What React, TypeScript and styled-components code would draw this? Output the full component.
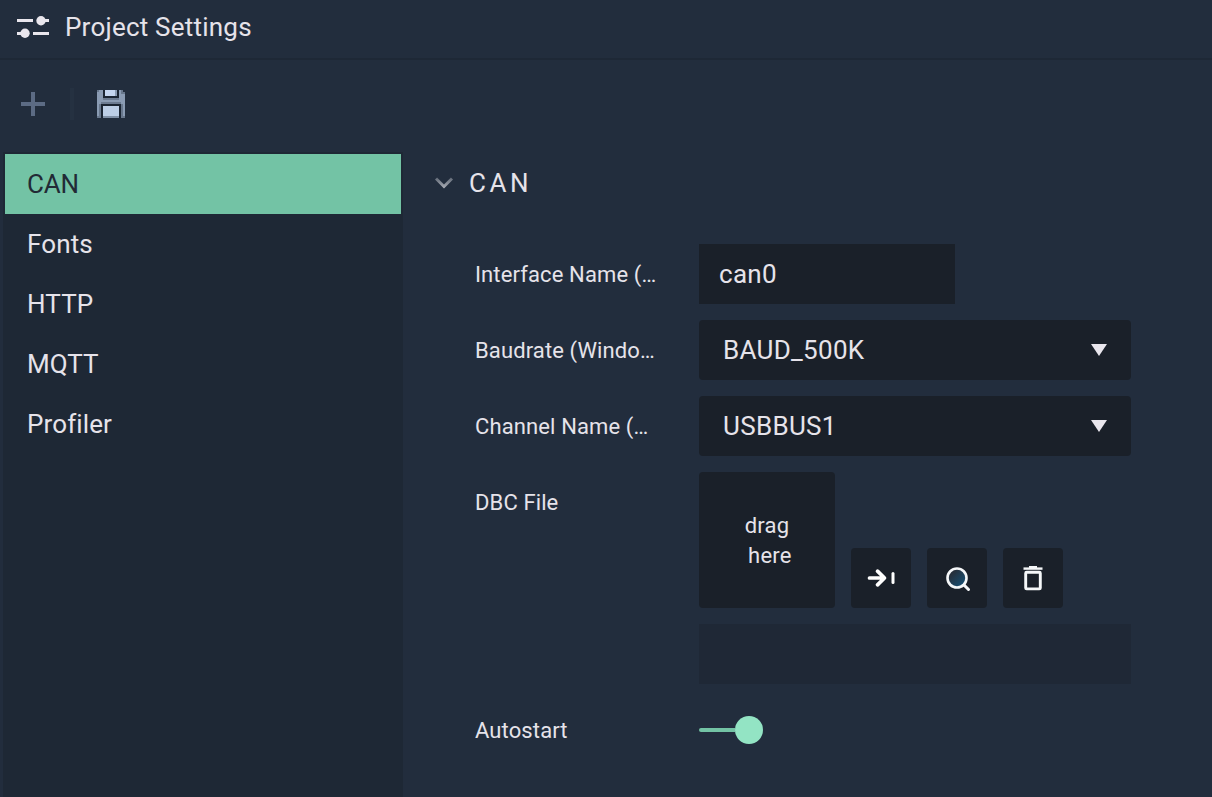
import React from 'react';
import styled, { createGlobalStyle } from 'styled-components';

const Global = createGlobalStyle`
  * { box-sizing: border-box; }
  body { margin: 0; background: #222d3d; }
`;

const Page = styled.div`
  display: flex;
  flex-direction: column;
  height: 797px;
  width: 1212px;
  overflow: hidden;
  background: #222d3d;
  color: #e6e3ea;
  font-family: Roboto, 'Liberation Sans', sans-serif;
  font-size: 26px;
`;

const Header = styled.header`
  display: flex;
  align-items: center;
  gap: 16px;
  height: 60px;
  padding: 0 17px 4px;
  border-bottom: 2px solid #1e2836;
`;

const Title = styled.h1`
  margin: 0;
  font-size: 26px;
  font-weight: 400;
  line-height: 54px;
  letter-spacing: 0.22px;
`;

const Toolbar = styled.div`
  display: flex;
  align-items: center;
  height: 92px;
  padding: 2px 20px 6px;
`;

const Divider = styled.span`
  width: 4px;
  height: 32px;
  margin: 0 23px 0 25px;
  background: #253141;
`;

const Body = styled.div`
  display: flex;
  flex: 1;
  padding-left: 3px;
`;

const Sidebar = styled.nav`
  width: 400px;
  padding: 2px;
  background: #1e2835;
`;

const NavItem = styled.div<{ $active?: boolean }>`
  height: 60px;
  padding-left: 22px;
  line-height: 60px;
  letter-spacing: ${(p) => (p.$active ? '-0.2px' : '0.12px')};
  background: ${(p) => (p.$active ? '#73c3a5' : 'transparent')};
  color: ${(p) => (p.$active ? '#222a35' : '#e6e3ea')};
`;

const Content = styled.main`
  flex: 1;
  padding-left: 32px;
`;

const SectionHead = styled.div`
  display: flex;
  align-items: center;
  gap: 16px;
  height: 60px;
  padding-top: 2px;
  letter-spacing: 3.6px;
`;

const Form = styled.div`
  display: flex;
  flex-direction: column;
  gap: 16px;
  padding: 32px 0 0 40px;
`;

const Row = styled.div`
  display: grid;
  grid-template-columns: 184px 432px;
  column-gap: 40px;
  align-items: start;
`;

const Label = styled.label`
  overflow: hidden;
  white-space: nowrap;
  font-size: 22px;
  line-height: 58px;
  padding-top: 2px;
  letter-spacing: 0.12px;
`;

const TextBox = styled.div`
  width: 256px;
  height: 60px;
  padding-left: 20px;
  line-height: 60px;
  letter-spacing: 0.3px;
  background: #1a2029;
`;

const Select = styled.div`
  display: flex;
  align-items: center;
  justify-content: space-between;
  height: 60px;
  padding: 0 24px;
  border-radius: 4px;
  background: #1a2029;
  letter-spacing: 0.3px;
`;

const FileStack = styled.div`
  display: flex;
  flex-direction: column;
  gap: 16px;
`;

const FileTools = styled.div`
  display: flex;
  align-items: flex-end;
  gap: 16px;
`;

const DropZone = styled.div`
  display: flex;
  align-items: center;
  justify-content: center;
  width: 136px;
  height: 136px;
  padding-top: 2px;
  border-radius: 4px;
  background: #1a2029;
  font-size: 22px;
  line-height: 30px;
  letter-spacing: 0.2px;
  text-align: center;
  white-space: pre;
`;

const IconButton = styled.button`
  display: flex;
  align-items: center;
  justify-content: center;
  width: 60px;
  height: 60px;
  padding: 0;
  border: 0;
  border-radius: 4px;
  background: #1a2029;
`;

const PathField = styled.div`
  height: 60px;
  background: #1f2836;
`;

const Switch = styled.div`
  display: flex;
  align-items: center;
  height: 60px;
`;

const Track = styled.span`
  width: 36px;
  height: 4px;
  border-radius: 2px 0 0 2px;
  background: #73c3a5;
`;

const Knob = styled.span`
  width: 28px;
  height: 28px;
  border-radius: 50%;
  background: #93e4c4;
`;

const SlidersIcon = () => (
  <svg width="32" height="22" viewBox="0 0 32 22" fill="#e9e6ed">
    <rect x="0" y="3" width="16" height="3" />
    <rect x="24" y="3" width="8" height="3" />
    <circle cx="24" cy="4.7" r="4.7" />
    <rect x="0" y="16" width="8" height="3" />
    <rect x="16" y="16" width="16" height="3" />
    <circle cx="8" cy="17.3" r="4.7" />
  </svg>
);

const PlusIcon = () => (
  <svg width="25" height="24" viewBox="0 0 25 24" fill="#5c6b84">
    <path d="M11 0h4v10h10v4H15v10h-4V14H1v-4h10z" />
  </svg>
);

const SaveIcon = () => (
  <svg width="28" height="28" viewBox="0 0 28 28" shapeRendering="crispEdges">
    <path d="M0 0h26v2h2v26H0z" fill="#8a9bb3" />
    <path d="M0 0h2v2H0zM24 0h2v4h-2zM26 2h2v2h-2zM2 14h2v14H2zM24 14h2v14h-2zM0 26h4v2H0zM24 26h4v2h-4z" fill="#68778c" />
    <rect x="6" y="0" width="16" height="8" fill="#1b2533" />
    <rect x="8" y="0" width="12" height="6" fill="#c5d6f0" />
    <rect x="18" y="0" width="2" height="6" fill="#8a9bb3" />
    <rect x="6" y="8" width="16" height="2" fill="#6b7a90" />
    <rect x="4" y="12" width="20" height="2" fill="#6b7a90" />
    <rect x="4" y="14" width="20" height="14" fill="#1b2533" />
    <rect x="6" y="16" width="16" height="10" fill="#bccee6" />
    <rect x="6" y="26" width="16" height="2" fill="#7f90a6" />
  </svg>
);

const ChevronIcon = () => (
  <svg width="18" height="12" viewBox="0 0 18 12" fill="none" strokeWidth="3">
    <defs>
      <linearGradient id="chevron" x1="0" y1="0" x2="0" y2="12" gradientUnits="userSpaceOnUse">
        <stop offset="0" stopColor="#5c6572" />
        <stop offset="0.9" stopColor="#a9acb5" />
      </linearGradient>
    </defs>
    <path d="M1 1.5l8 8 8-8" stroke="url(#chevron)" />
  </svg>
);

const CaretIcon = () => (
  <svg width="16" height="12" viewBox="0 0 16 12" fill="#e9e6ed">
    <path d="M0 0h16L8 12z" />
  </svg>
);

const ArrowIcon = () => (
  <svg width="28" height="20" viewBox="0 0 28 20" fill="none" stroke="#fff" strokeLinecap="round" strokeLinejoin="round">
    <path d="M2.500 10h14M10.500 3.200l7 6.800-7 6.800" strokeWidth="3.700" />
    <path d="M26 5.500v9" strokeWidth="3" />
  </svg>
);

const SearchIcon = () => (
  <svg width="28" height="28" viewBox="0 0 28 28" fill="none" stroke="#f5f7f9">
    <defs>
      <linearGradient id="lens" x1="0" y1="0" x2="1" y2="1">
        <stop offset="0.25" stopColor="#26303c" />
        <stop offset="1" stopColor="#135680" />
      </linearGradient>
    </defs>
    <circle cx="14" cy="14" r="9.500" fill="url(#lens)" strokeWidth="2.600" />
    <path d="M21 21l4.500 4.500" strokeWidth="3" strokeLinecap="round" />
  </svg>
);

const TrashIcon = () => (
  <svg width="20" height="26" viewBox="0 0 20 26" fill="none" stroke="#f5f7f9">
    <path d="M0.500 3.600h19" strokeWidth="2.400" />
    <path d="M6 2h8" strokeWidth="2" />
    <rect x="2.700" y="7.200" width="14.600" height="16.700" rx="1" strokeWidth="2.900" />
  </svg>
);

const sections = ['CAN', 'Fonts', 'HTTP', 'MQTT', 'Profiler'];

export default function App() {
  return (
    <Page>
      <Global />
      <Header>
        <SlidersIcon />
        <Title>Project Settings</Title>
      </Header>
      <Toolbar>
        <PlusIcon />
        <Divider />
        <SaveIcon />
      </Toolbar>
      <Body>
        <Sidebar>
          {sections.map((name, i) => (
            <NavItem key={name} $active={i === 0}>{name}</NavItem>
          ))}
        </Sidebar>
        <Content>
          <SectionHead>
            <ChevronIcon />
            <span>CAN</span>
          </SectionHead>
          <Form>
            <Row>
              <Label>Interface Name (…</Label>
              <TextBox>can0</TextBox>
            </Row>
            <Row>
              <Label>Baudrate (Windo…</Label>
              <Select>BAUD_500K<CaretIcon /></Select>
            </Row>
            <Row>
              <Label>Channel Name (…</Label>
              <Select>USBBUS1<CaretIcon /></Select>
            </Row>
            <Row>
              <Label>DBC File</Label>
              <FileStack>
                <FileTools>
                  <DropZone>{'drag\n here'}</DropZone>
                  <IconButton><ArrowIcon /></IconButton>
                  <IconButton><SearchIcon /></IconButton>
                  <IconButton><TrashIcon /></IconButton>
                </FileTools>
                <PathField />
              </FileStack>
            </Row>
            <Row>
              <Label>Autostart</Label>
              <Switch><Track /><Knob /></Switch>
            </Row>
          </Form>
        </Content>
      </Body>
    </Page>
  );
}
